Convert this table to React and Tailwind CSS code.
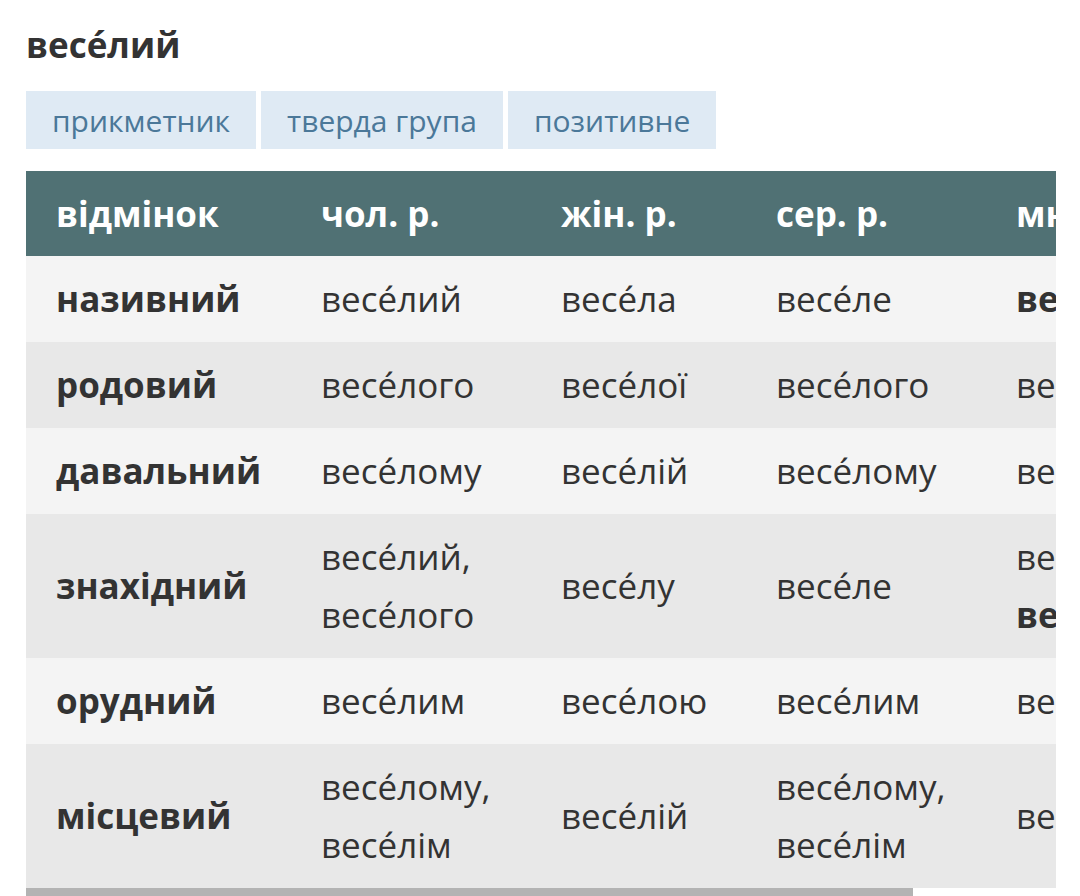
import React from "react";

const rows = [
  { name: "називний", m: ["весе́лий"], f: ["весе́ла"], n: ["весе́ле"], p: [["весе́лі", true]] },
  { name: "родовий", m: ["весе́лого"], f: ["весе́лої"], n: ["весе́лого"], p: [["весе́лих", false]] },
  { name: "давальний", m: ["весе́лому"], f: ["весе́лій"], n: ["весе́лому"], p: [["весе́лим", false]] },
  {
    name: "знахідний",
    m: ["весе́лий,", "весе́лого"],
    f: ["весе́лу"],
    n: ["весе́ле"],
    p: [["весе́лі,", false], ["весе́лих", true]],
  },
  { name: "орудний", m: ["весе́лим"], f: ["весе́лою"], n: ["весе́лим"], p: [["весе́лими", false]] },
  {
    name: "місцевий",
    m: ["весе́лому,", "весе́лім"],
    f: ["весе́лій"],
    n: ["весе́лому,", "весе́лім"],
    p: [["весе́лих", false]],
  },
];

const Lines = ({ items }) =>
  items.map((t, i) => (
    <div key={i} className="whitespace-nowrap">
      {t}
    </div>
  ));

const App = () => {
  return (
    <div className="min-h-[896px] bg-white pl-[26px] pr-[24px] pt-[22px] font-['Open_Sans',sans-serif] text-[#333]">
      <h1 className="text-[35px] font-bold leading-[46px]">весе́лий</h1>

      <div className="mt-[23px] flex gap-[5px]">
        {["прикметник", "тверда група", "позитивне"].map((t) => (
          <span
            key={t}
            className="flex h-[58px] items-center bg-[#dfeaf4] px-[26px] text-[30px] text-[#4b7899]"
          >
            {t}
          </span>
        ))}
      </div>

      <div className="mt-[22px] w-[1030px] overflow-hidden">
        <table className="w-[1196px] table-fixed border-collapse text-left text-[35px] leading-[58px]">
          <colgroup>
            <col className="w-[265px]" />
            <col className="w-[240px]" />
            <col className="w-[215px]" />
            <col className="w-[240px]" />
            <col className="w-[236px]" />
          </colgroup>
          <thead>
            <tr className="h-[85px] bg-[#507174] text-white">
              {["відмінок", "чол. р.", "жін. р.", "сер. р.", "мн."].map((h) => (
                <th key={h} className="px-[30px] font-bold whitespace-nowrap">
                  {h}
                </th>
              ))}
            </tr>
          </thead>
          <tbody>
            {rows.map((r, i) => (
              <tr key={r.name} className={i % 2 === 0 ? "bg-[#f4f4f4]" : "bg-[#e8e8e8]"}>
                <td className="pl-[30px] py-[14px] font-bold whitespace-nowrap">{r.name}</td>
                <td className="px-[30px] py-[14px]">
                  <Lines items={r.m} />
                </td>
                <td className="px-[30px] py-[14px]">
                  <Lines items={r.f} />
                </td>
                <td className="px-[30px] py-[14px]">
                  <Lines items={r.n} />
                </td>
                <td className="px-[30px] py-[14px]">
                  {r.p.map(([t, b], k) => (
                    <div key={k} className={b ? "font-bold whitespace-nowrap" : "whitespace-nowrap"}>
                      {t}
                    </div>
                  ))}
                </td>
              </tr>
            ))}
          </tbody>
        </table>
        <div className="h-[10px] w-[887px] bg-[#b3b3b3]" />
      </div>
    </div>
  );
};

export default App;
